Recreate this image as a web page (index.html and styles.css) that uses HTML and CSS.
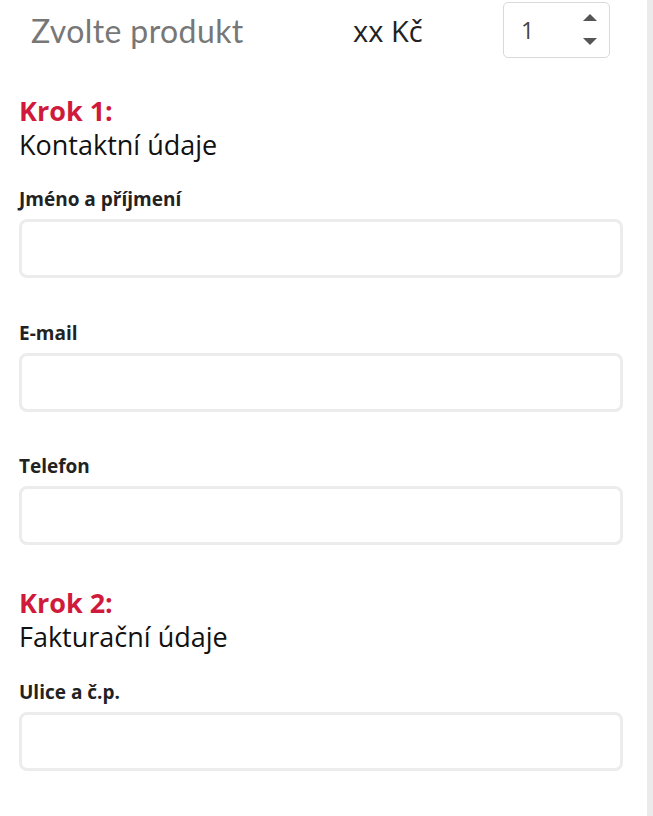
FILE: index.html
```html
<!DOCTYPE html>
<html lang="cs">
<head>
<meta charset="utf-8">
<title>Objednávka</title>
<link rel="stylesheet" href="styles.css">
</head>
<body>
<div class="page">
  <main class="content">
    <div class="product-row">
      <div class="product-name">Zvolte produkt</div>
      <div class="product-price">xx Kč</div>
      <div class="qty">
        <span class="qty-value">1</span>
        <svg class="qty-spin" width="16" height="34" viewBox="0 0 16 34">
          <path d="M1 8 L8 1 L15 8 Z" fill="#555"/>
          <path d="M1 25 L15 25 L8 32 Z" fill="#555"/>
        </svg>
      </div>
    </div>

    <section class="step">
      <h2 class="step-title">Krok 1:</h2>
      <div class="step-sub">Kontaktní údaje</div>
      <div class="field">
        <label class="field-label">Jméno a příjmení</label>
        <div class="field-input"></div>
      </div>
      <div class="field">
        <label class="field-label">E-mail</label>
        <div class="field-input"></div>
      </div>
      <div class="field">
        <label class="field-label">Telefon</label>
        <div class="field-input"></div>
      </div>
    </section>

    <section class="step">
      <h2 class="step-title">Krok 2:</h2>
      <div class="step-sub">Fakturační údaje</div>
      <div class="field">
        <label class="field-label">Ulice a č.p.</label>
        <div class="field-input"></div>
      </div>
    </section>
  </main>
  <div class="side-strip"></div>
</div>
</body>
</html>
```

FILE: styles.css
```css
* { box-sizing: border-box; }
html, body { margin: 0; padding: 0; background: #fff; }
body { font-family: "Open Sans", "Liberation Sans", sans-serif; color: #1a1a1a; }

.page {
  display: flex;
  min-height: 816px;
}
.content {
  flex: 1;
  padding: 2px 24px 0 19px;
}
.side-strip {
  width: 6px;
  background: #ebebeb;
}

.product-row {
  display: flex;
  align-items: center;
  height: 56px;
}
.product-name {
  width: 334px;
  padding-left: 12px;
  font-family: "Lato", sans-serif;
  font-size: 32px;
  color: #777;
  letter-spacing: 0.4px;
}
.product-price {
  width: 150px;
  font-size: 29px;
  color: #222;
}
.qty {
  width: 107px;
  height: 56px;
  border: 1px solid #d9d9d9;
  border-radius: 5px;
  display: flex;
  align-items: center;
  justify-content: space-between;
  padding: 0 11px 0 17px;
}
.qty-value {
  font-size: 23px;
  color: #444;
}
.qty-spin { display: block; }

.step { margin-top: 37px; }
.step + .step { margin-top: 42px; }
.step-title {
  margin: 0;
  font-size: 27px;
  line-height: 32px;
  font-weight: 700;
  color: #cf1a3c;
}
.step-sub {
  font-size: 27px;
  line-height: 36px;
  color: #111;
}
.field { margin-top: 24px; }
.field + .field { margin-top: 42.5px; }
.step + .step .field { margin-top: 25px; }
.field-label {
  display: block;
  font-size: 19px;
  line-height: 24px;
  font-weight: 700;
  color: #222;
  margin-bottom: 8px;
}
.field-input {
  height: 59px;
  border: 3px solid #ececec;
  border-radius: 8px;
  background: #fff;
}
```
